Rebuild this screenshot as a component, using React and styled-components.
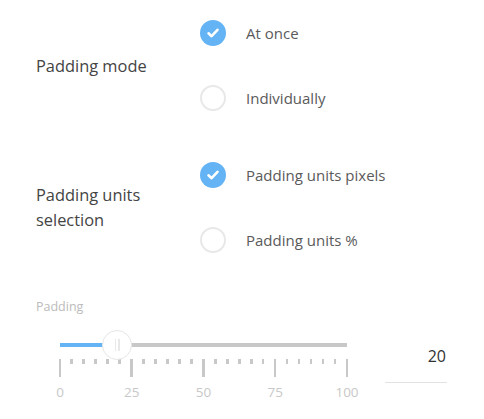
import React, { useState } from "react";
import styled, { createGlobalStyle } from "styled-components";

const GlobalStyle = createGlobalStyle`
  html, body {
    margin: 0;
    padding: 0;
    background: #fff;
    font-family: "Open Sans", "Liberation Sans", sans-serif;
  }
`;

const Page = styled.div`
  width: 484px;
  height: 419px;
  box-sizing: border-box;
  padding: 20px 0 0 36px;
  overflow: hidden;
`;

const Field = styled.div`
  display: grid;
  grid-template-columns: 164px 1fr;
  align-items: center;
  margin-bottom: 51px;
`;

const FieldLabel = styled.div`
  font-size: 16.4px;
  line-height: 25px;
  color: #444;
  padding-right: 20px;
  margin-top: -1px;
`;

const Options = styled.div`
  display: flex;
  flex-direction: column;
  gap: 39px;
`;

const Option = styled.label`
  display: flex;
  align-items: center;
  gap: 20px;
  font-size: 15px;
  color: #5a5a5a;
  cursor: pointer;
  height: 26px;
`;

const Radio = styled.span`
  width: 26px;
  height: 26px;
  box-sizing: border-box;
  border-radius: 50%;
  border: ${(p) => (p.$checked ? "none" : "2px solid #e8e8e8")};
  background: ${(p) => (p.$checked ? "#64b3f4" : "#fff")};
  display: flex;
  align-items: center;
  justify-content: center;
  flex: none;
`;

const SliderSection = styled.div`
  margin-top: -5px;
`;

const SmallLabel = styled.div`
  font-size: 12.5px;
  line-height: 16px;
  color: #bbb;
`;

const SliderRow = styled.div`
  display: flex;
  align-items: flex-start;
  padding-left: 24px;
  margin-top: 16px;
  gap: 38px;
`;

const SliderBox = styled.div`
  width: 287px;
`;

const Rail = styled.div`
  position: relative;
  height: 28px;
`;

const Track = styled.div`
  position: absolute;
  left: 0;
  right: 0;
  top: 12px;
  height: 4px;
  background: #c8c8c8;
`;

const Fill = styled.div`
  position: absolute;
  left: 0;
  top: 12px;
  height: 4px;
  background: #64b3f4;
`;

const Thumb = styled.div`
  position: absolute;
  top: -1px;
  width: 30px;
  height: 30px;
  margin-left: -15px;
  box-sizing: border-box;
  border-radius: 50%;
  border: 1px solid #e6e6e6;
  background: #fff;
  display: flex;
  align-items: center;
  justify-content: center;
  gap: 2px;
`;

const Grip = styled.span`
  width: 1.5px;
  height: 12px;
  background: #e8e8e8;
`;

const Ticks = styled.div`
  display: flex;
  justify-content: space-between;
  align-items: flex-start;
  width: 290px;
  margin-left: -1.5px;
`;

const Tick = styled.span`
  width: 2.5px;
  height: ${(p) => (p.$major ? "18px" : "5px")};
  background: #c8c8c8;
`;

const Marks = styled.div`
  display: flex;
  justify-content: space-between;
  margin-top: 7px;
`;

const Mark = styled.span`
  width: 0;
  display: flex;
  justify-content: center;
  font-size: 13.5px;
  line-height: 16px;
  color: #c8c8c8;
`;

const ValueInput = styled.input`
  width: 62px;
  height: 47px;
  margin-top: 5px;
  box-sizing: border-box;
  border: none;
  border-bottom: 1px solid #e2e2e2;
  padding: 0 1px 6px 0;
  text-align: right;
  font-family: inherit;
  font-size: 16px;
  color: #333;
  outline: none;
  background: transparent;
`;

function Check() {
  return (
    <svg width="14" height="14" viewBox="0 0 14 14">
      <path
        d="M2.5 7.3 L5.6 10.2 L11.5 3.8"
        fill="none"
        stroke="#fff"
        strokeWidth="2.6"
        strokeLinecap="round"
        strokeLinejoin="round"
      />
    </svg>
  );
}

function RadioGroup({ label, options, value, onChange }) {
  return (
    <Field>
      <FieldLabel>{label}</FieldLabel>
      <Options>
        {options.map((o) => (
          <Option key={o} onClick={() => onChange(o)}>
            <Radio $checked={value === o}>{value === o && <Check />}</Radio>
            {o}
          </Option>
        ))}
      </Options>
    </Field>
  );
}

export default function App() {
  const [mode, setMode] = useState("At once");
  const [units, setUnits] = useState("Padding units pixels");
  const [padding, setPadding] = useState(20);

  const ticks = Array.from({ length: 25 }, (_, i) => i);

  return (
    <>
      <GlobalStyle />
      <Page>
        <RadioGroup
          label="Padding mode"
          options={["At once", "Individually"]}
          value={mode}
          onChange={setMode}
        />
        <RadioGroup
          label="Padding units selection"
          options={["Padding units pixels", "Padding units %"]}
          value={units}
          onChange={setUnits}
        />
        <SliderSection>
          <SmallLabel>Padding</SmallLabel>
          <SliderRow>
            <SliderBox>
              <Rail>
                <Track />
                <Fill style={{ width: `${padding}%` }} />
                <Thumb style={{ left: `${padding}%` }}>
                  <Grip />
                  <Grip />
                </Thumb>
              </Rail>
              <Ticks>
                {ticks.map((i) => (
                  <Tick key={i} $major={i % 6 === 0} />
                ))}
              </Ticks>
              <Marks>
                {[0, 25, 50, 75, 100].map((m) => (
                  <Mark key={m}>{m}</Mark>
                ))}
              </Marks>
            </SliderBox>
            <ValueInput
              value={padding}
              onChange={(e) => setPadding(Number(e.target.value) || 0)}
            />
          </SliderRow>
        </SliderSection>
      </Page>
    </>
  );
}
